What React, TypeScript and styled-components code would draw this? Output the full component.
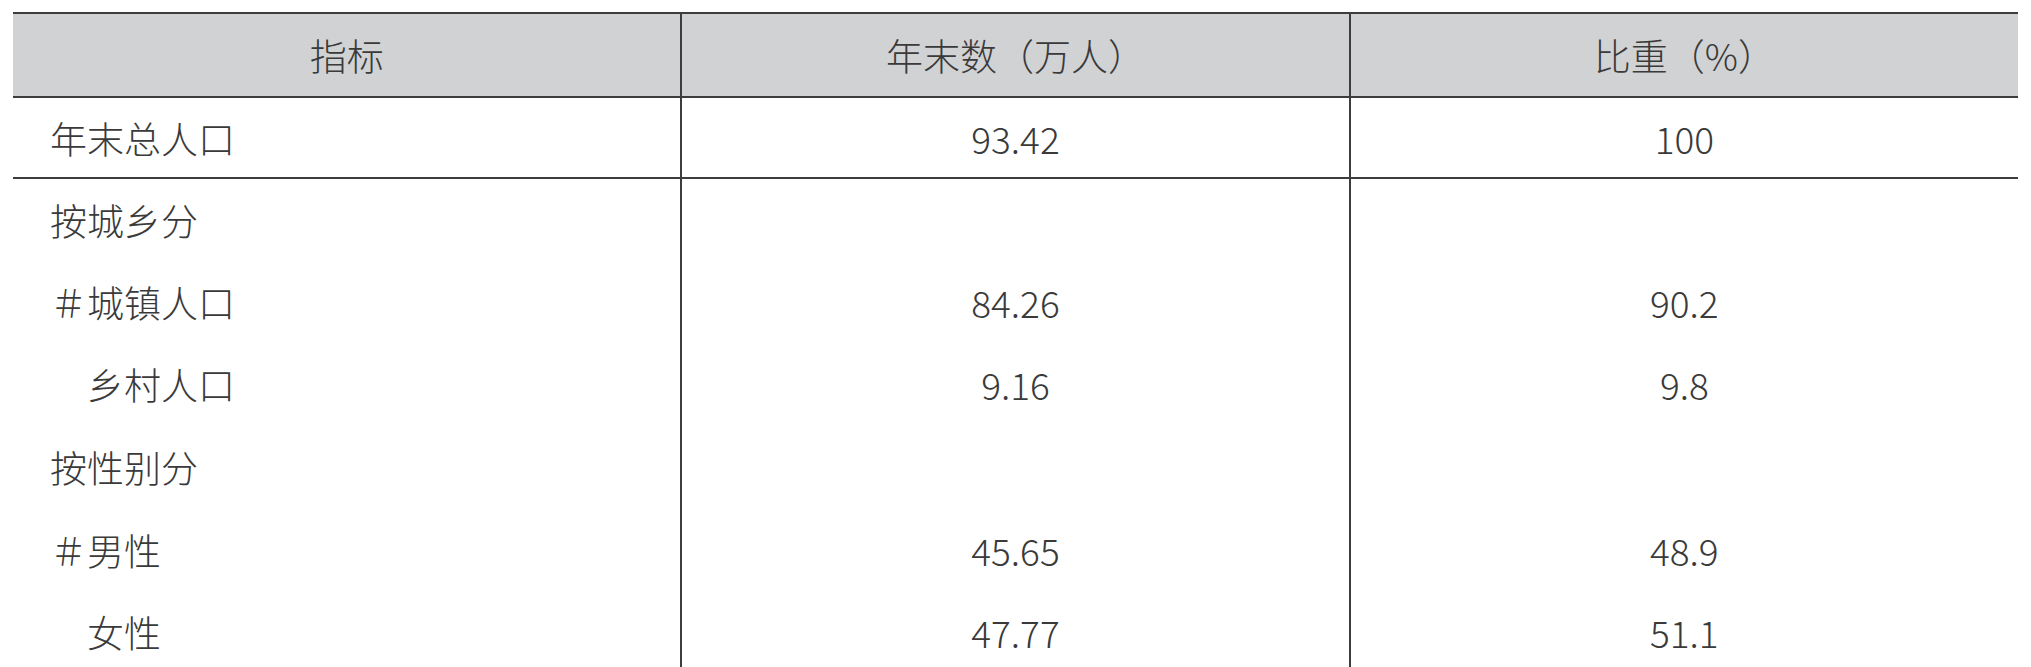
import React from "react";
import styled, { createGlobalStyle } from "styled-components";

const GlobalStyle = createGlobalStyle`
  html, body {
    margin: 0;
    padding: 0;
    background: #ffffff;
  }
`;

const Page = styled.div`
  padding: 12px 13px 0 13px;
  font-family: "Noto Sans CJK SC", "Noto Sans", sans-serif;
  color: #3a3a3a;
`;

const Table = styled.table`
  width: 2005px;
  border-collapse: collapse;
  table-layout: fixed;
  font-size: 37px;
  font-weight: 300;
`;

const HeadCell = styled.th`
  height: 82px;
  padding: 0;
  background: #d1d2d4;
  font-weight: 300;
  text-align: center;
  border-top: 2px solid #3d3d3d;
  border-bottom: 2px solid #3d3d3d;
  & + & {
    border-left: 2px solid #3d3d3d;
  }
`;

const Row = styled.tr<{ $ruled?: boolean }>`
  height: ${(p) => (p.$ruled ? "81px" : "82.6px")};
  border-bottom: ${(p) => (p.$ruled ? "2px solid #3d3d3d" : "none")};
`;

const LabelCell = styled.td`
  padding: 0 0 0 37px;
  text-align: left;
  white-space: pre;
`;

const ValueCell = styled.td`
  padding: 0;
  text-align: center;
  border-left: 2px solid #3d3d3d;
`;

type Item = { label: string; count: string; share: string; ruled?: boolean };

const rows: Item[] = [
  { label: "年末总人口", count: "93.42", share: "100", ruled: true },
  { label: "按城乡分", count: "", share: "" },
  { label: "＃城镇人口", count: "84.26", share: "90.2" },
  { label: "　乡村人口", count: "9.16", share: "9.8" },
  { label: "按性别分", count: "", share: "" },
  { label: "＃男性", count: "45.65", share: "48.9" },
  { label: "　女性", count: "47.77", share: "51.1" },
];

const App = () => {
  return (
    <Page>
      <GlobalStyle />
      <Table>
        <thead>
          <tr>
            <HeadCell>指标</HeadCell>
            <HeadCell>年末数（万人）</HeadCell>
            <HeadCell>比重（%）</HeadCell>
          </tr>
        </thead>
        <tbody>
          {rows.map((r) => (
            <Row key={r.label} $ruled={r.ruled}>
              <LabelCell>{r.label}</LabelCell>
              <ValueCell>{r.count}</ValueCell>
              <ValueCell>{r.share}</ValueCell>
            </Row>
          ))}
        </tbody>
      </Table>
    </Page>
  );
};

export default App;
